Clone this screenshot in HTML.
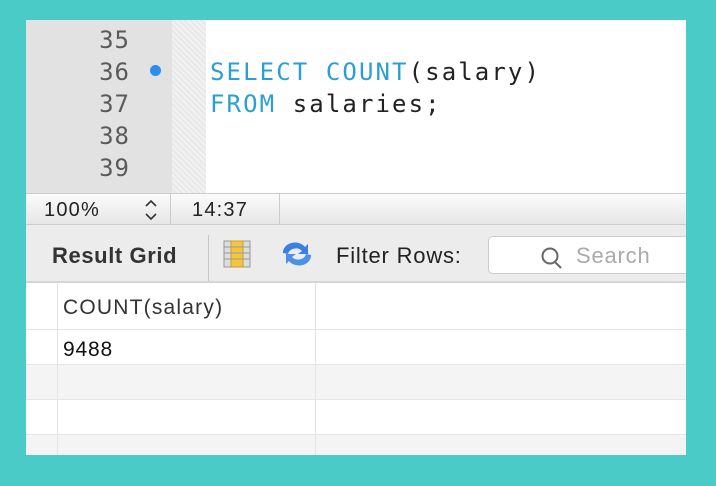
<!DOCTYPE html>
<html><head><style>
*{margin:0;padding:0;box-sizing:border-box}
body{width:716px;height:486px;background:#4acbc8;position:relative;overflow:hidden;font-family:"Liberation Sans",sans-serif}
#p{position:absolute;left:26px;top:20px;width:660px;height:435px;background:#fff;overflow:hidden}
.g{position:absolute;left:0;top:0;width:146px;height:173px;background:#e2e2e2}
.h{position:absolute;left:146px;top:0;width:34px;height:173px;background:repeating-linear-gradient(45deg,#f2f2f2 0 2px,#e8e8e8 2px 4px)}
.ln{position:absolute;right:556px;font:24px "DejaVu Sans Mono","Liberation Mono",monospace;color:#5a5a5a;line-height:32px;letter-spacing:1px}
.code{position:absolute;left:184px;font:24px "DejaVu Sans Mono","Liberation Mono",monospace;line-height:32px;color:#222;letter-spacing:2.1px}
.k{color:#2a9fd6}
.sb{position:absolute;left:0;top:173px;width:660px;height:32px;background:linear-gradient(#fbfbfb,#e6e6e6);border-top:1px solid #ccc;border-bottom:1px solid #ccc;font-size:20px;color:#222;letter-spacing:1.2px}
.tb{position:absolute;left:0;top:205px;width:660px;height:58px;background:#ececec;border-bottom:2px solid #d6d6d6}
.row{position:absolute;left:0;width:660px;border-bottom:1px solid #e6e6e6}
.vl{position:absolute;top:263px;bottom:0;width:1px;background:#e4e4e4}
</style></head><body><div id="p">
<div class="g"></div><div class="h"></div>
<div class="ln" style="top:4px">35</div>
<div class="ln" style="top:36px">36</div>
<div class="ln" style="top:68px">37</div>
<div class="ln" style="top:100px">38</div>
<div class="ln" style="top:132px">39</div>
<div style="position:absolute;left:124px;top:45px;width:11px;height:11px;border-radius:50%;background:#2a8ef0"></div>
<div class="code" style="top:36px"><span class="k">SELECT COUNT</span>(salary)</div>
<div class="code" style="top:68px"><span class="k">FROM</span> salaries;</div>
<div class="sb">
<span style="position:absolute;left:18px;top:5px">100%</span>
<svg style="position:absolute;left:118px;top:4px" width="14" height="24"><path d="M2 8l5-5 5 5M2 16l5 5 5-5" fill="none" stroke="#333" stroke-width="1.6"/></svg>
<div style="position:absolute;left:144px;top:0;width:1px;height:31px;background:#ccc"></div>
<span style="position:absolute;left:166px;top:5px">14:37</span>
<div style="position:absolute;left:253px;top:0;width:1px;height:31px;background:#ccc"></div>
</div>
<div class="tb">
<span style="position:absolute;left:26px;top:18px;font-size:22px;font-weight:bold;color:#333;letter-spacing:.6px">Result Grid</span>
<div style="position:absolute;left:182px;top:10px;width:1px;height:46px;background:#c8c8c8"></div>
<svg style="position:absolute;left:197px;top:15px" width="28" height="28"><rect x="1" y="1" width="26" height="26" fill="#ddd" stroke="#999"/><rect x="8" y="1" width="12" height="26" fill="#f5c542" stroke="#c9a02a"/><path d="M1 7H27M1 13H27M1 19H27" stroke="#999"/></svg>
<svg style="position:absolute;left:253px;top:14px" width="36" height="30"><path d="M4 14a12 10 0 0 1 22-6l3-3v10h-10l4-3a8 7 0 0 0-14 3z" fill="#3b7fe0"/><path d="M32 16a12 10 0 0 1-22 6l-3 3v-10h10l-4 3a8 7 0 0 0 14-3z" fill="#4a90e8"/></svg>
<span style="position:absolute;left:310px;top:18px;font-size:22px;color:#222;letter-spacing:.8px">Filter Rows:</span>
<div style="position:absolute;left:462px;top:11px;width:220px;height:38px;background:#fff;border:1px solid #ccc;border-radius:5px"></div>
<svg style="position:absolute;left:514px;top:21px" width="24" height="24"><circle cx="10" cy="10" r="7.5" fill="none" stroke="#666" stroke-width="2"/><path d="M15 16l6 6" stroke="#666" stroke-width="2"/></svg>
<span style="position:absolute;left:550px;top:18px;font-size:22px;color:#aaa;letter-spacing:.8px">Search</span>
</div>
<div class="row" style="top:263px;height:47px"></div>
<div class="row" style="top:310px;height:35px"></div>
<div class="row" style="top:345px;height:35px;background:#f4f4f4"></div>
<div class="row" style="top:380px;height:35px"></div>
<div class="row" style="top:415px;height:35px;background:#f4f4f4"></div>
<div class="vl" style="left:31px"></div><div class="vl" style="left:289px"></div>
<span style="position:absolute;left:37px;top:276px;font-size:21px;color:#333;letter-spacing:1.2px">COUNT(salary)</span>
<span style="position:absolute;left:37px;top:318px;font-size:21px;color:#111;letter-spacing:.8px">9488</span>
</div></body></html>
